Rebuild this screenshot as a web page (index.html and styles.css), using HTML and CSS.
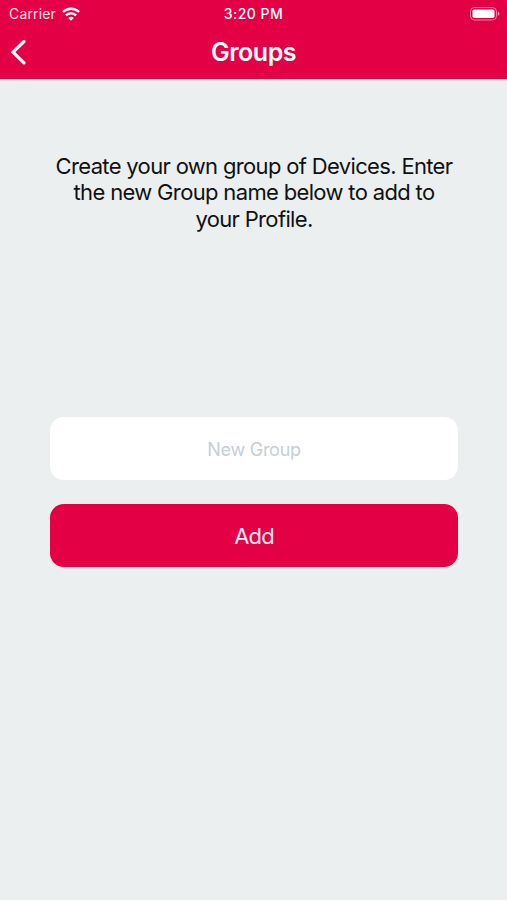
FILE: index.html
```html
<!DOCTYPE html>
<html lang="en">
<head>
  <meta charset="UTF-8">
  <title>Groups</title>
  <link rel="stylesheet" href="styles.css">
</head>
<body>
  <header>
    <div class="status">
      <div class="carrier">
        <span>Carrier</span>
        <svg class="wifi" viewBox="0 0 18 14" width="18" height="14">
          <path d="M.9 5a11.6 11.6 0 0 1 16.2 0M3.9 8.4a7.4 7.4 0 0 1 10.2 0" fill="none" stroke="#fff" stroke-width="2.4"/>
          <path d="M9 13.8L6.2 11a4 4 0 0 1 5.6 0z" fill="#fff"/>
        </svg>
      </div>
      <span class="time">3:20 PM</span>
      <svg class="battery" viewBox="0 0 31 14" width="31" height="14">
        <rect x=".5" y=".5" width="26" height="12.5" rx="4" fill="none" stroke="#fff" stroke-opacity=".5"/>
        <rect x="2.5" y="2.5" width="22" height="8.5" rx="1.8" fill="#fff"/>
        <path d="M27.8 4.5q3.4 2.2 0 4.4z" fill="#fff" fill-opacity=".6"/>
      </svg>
    </div>
    <nav>
      <svg class="back" viewBox="0 0 16 26" width="16" height="26">
        <path d="M14 2.5L3 13.2l11 10.6" fill="none" stroke="#fff" stroke-width="3.2" stroke-linecap="round"/>
      </svg>
      <h1>Groups</h1>
    </nav>
  </header>
  <main>
    <p>Create your own group of Devices. Enter<br>the new Group name below to add to<br>your Profile.</p>
    <form>
      <input type="text" placeholder="New Group">
      <button type="button">Add</button>
    </form>
  </main>
</body>
</html>
```
FILE: styles.css
```css
* { box-sizing: border-box; }
body { margin: 0; min-height: 900px; background: #ebeff0; font-family: Inter, sans-serif; }
header { height: 79px; background: #e30045; color: #fff; }
.status { display: grid; grid-template-columns: 1fr auto 1fr; align-items: center; height: 27px; padding: 0 6px 0 9px; font-size: 14px; }
.carrier { display: flex; align-items: center; gap: 6px; color: #ffe3ea; letter-spacing: 0.15px; }
.time { margin-right: 3px; font-weight: 500; letter-spacing: 0.5px; }
.battery { justify-self: end; }
nav { display: grid; grid-template-columns: 30px 1fr 30px; align-items: center; height: 50px; padding: 0 10px; }
h1 { margin: 0; font-size: 25px; font-weight: 600; letter-spacing: -0.5px; text-align: center; }
main { padding: 74px 49px 0 50px; }
p { margin: 0; height: 264px; color: #111; font-size: 22px; line-height: 26.3px; letter-spacing: -0.66px; text-align: center; white-space: nowrap; }
input, button { display: block; width: 100%; height: 63px; border: 0; border-radius: 14px; font-family: inherit; text-align: center; }
input { padding: 2px 0 0; background: #fff; font-size: 18px; letter-spacing: -0.25px; }
input::placeholder { color: #c5cfd6; }
button { margin-top: 24px; background: #e30045; color: #ffebf0; font-size: 22px; letter-spacing: -0.8px; }
```
